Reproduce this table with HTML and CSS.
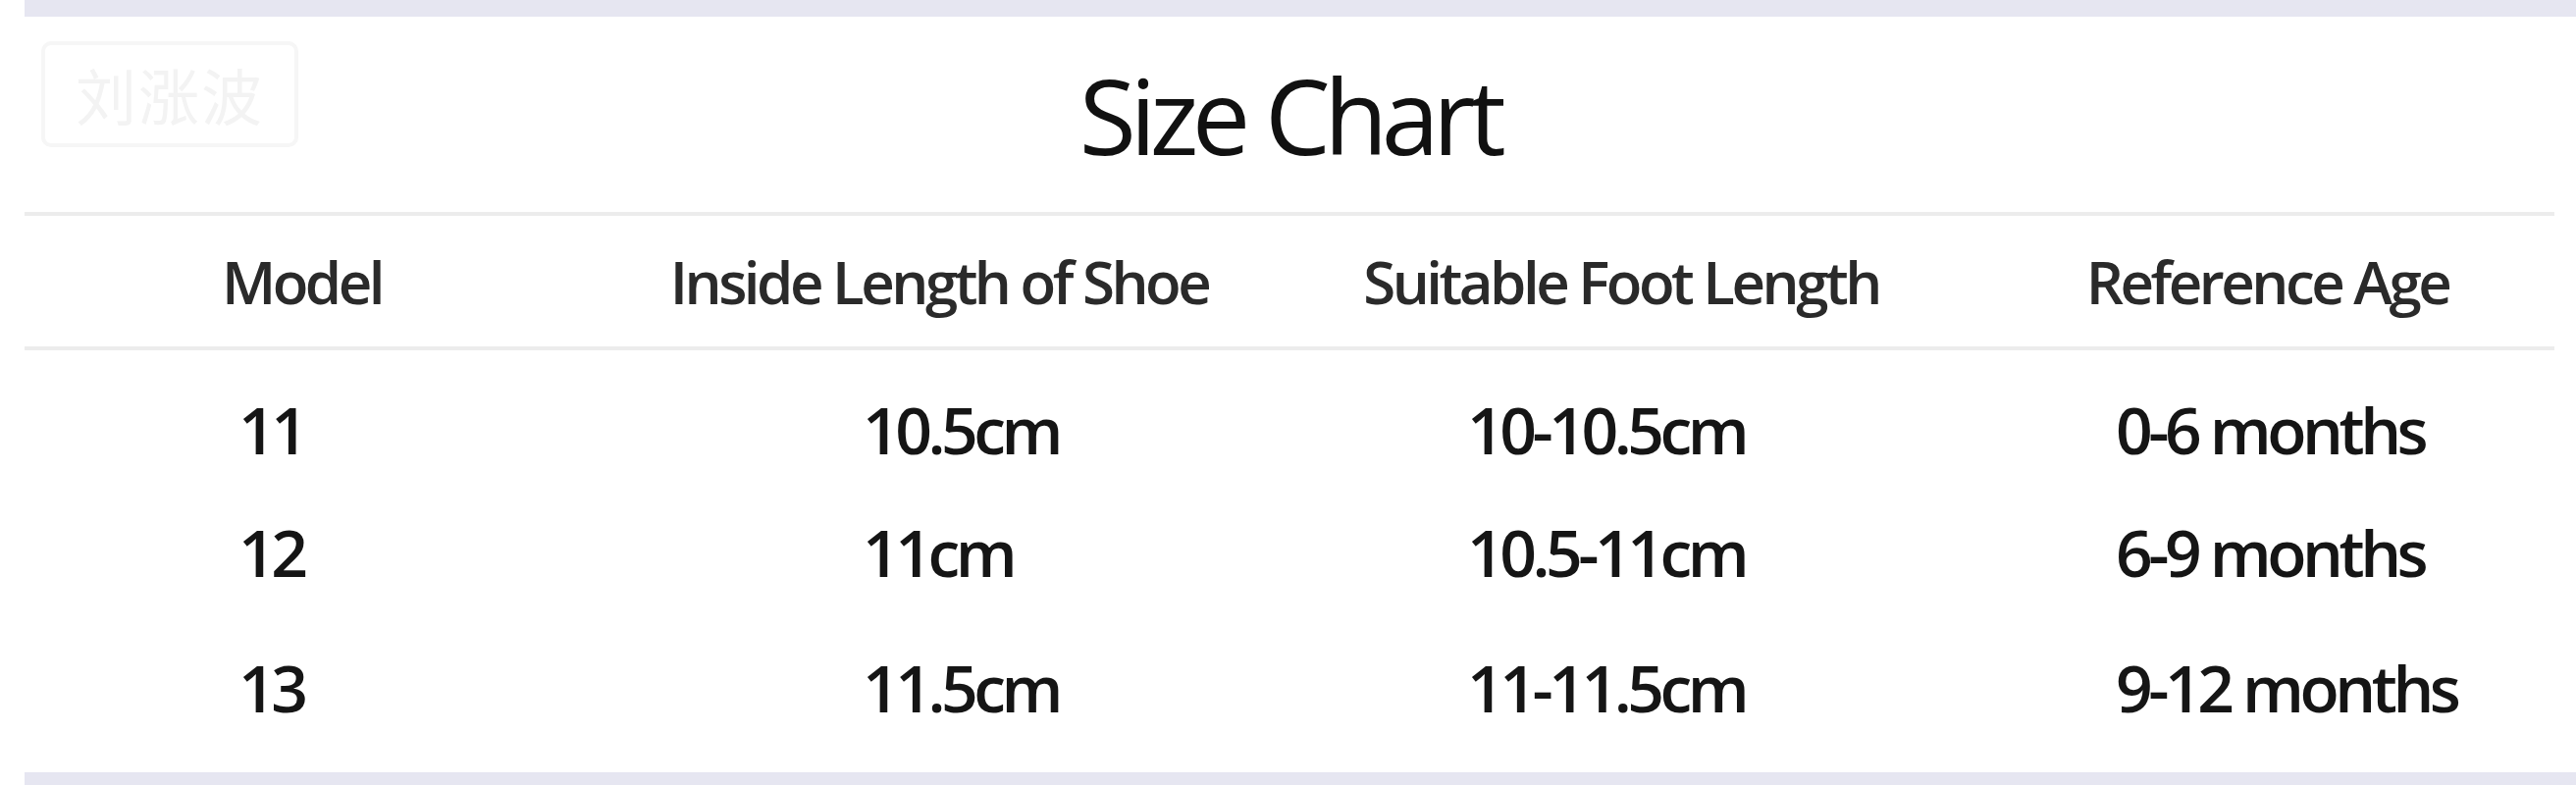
FILE: index.html
```html
<!DOCTYPE html>
<html lang="en">
<head>
  <meta charset="UTF-8">
  <meta name="viewport" content="width=device-width, initial-scale=1.0">
  <title>Size Chart</title>
  <link rel="stylesheet" href="styles.css">
</head>
<body>
  <div class="band"></div>
  <div class="head">
    <div class="stamp">刘涨波</div>
    <h1 class="title">Size Chart</h1>
  </div>
  <div class="rule"></div>
  <div class="row header">
    <div class="cell">Model</div>
    <div class="cell">Inside Length of Shoe</div>
    <div class="cell">Suitable Foot Length</div>
    <div class="cell">Reference Age</div>
  </div>
  <div class="rule"></div>
  <div class="rows">
    <div class="row data">
      <div class="cell">11</div>
      <div class="cell">10.5cm</div>
      <div class="cell">10-10.5cm</div>
      <div class="cell">0-6 months</div>
    </div>
    <div class="row data">
      <div class="cell">12</div>
      <div class="cell">11cm</div>
      <div class="cell">10.5-11cm</div>
      <div class="cell">6-9 months</div>
    </div>
    <div class="row data">
      <div class="cell">13</div>
      <div class="cell">11.5cm</div>
      <div class="cell">11-11.5cm</div>
      <div class="cell">9-12 months</div>
    </div>
  </div>
  <div class="band"></div>
</body>
</html>
```

FILE: styles.css
```css
body {
  margin: 0;
  width: 2625px;
  height: 800px;
  overflow: hidden;
  background-color: #fff;
  font-family: "Open Sans", "Noto Sans CJK SC", sans-serif;
  color: #141414;
}
.band {
  margin-left: 25px;
  height: 17px;
  background-color: #e6e6f1;
}
.head {
  position: relative;
  height: 199px;
  display: flex;
  justify-content: center;
  align-items: center;
  margin-left: 25px;
  margin-right: 22px;
}
.stamp {
  position: absolute;
  left: 17px;
  top: 25px;
  width: 262px;
  height: 108px;
  box-sizing: border-box;
  border: 4px solid #f6f6f6;
  border-radius: 10px;
  display: flex;
  align-items: center;
  justify-content: center;
  font-size: 62px;
  color: #f3f3f3;
  letter-spacing: 2px;
}
.title {
  margin: 0;
  font-size: 106px;
  font-weight: 500;
  letter-spacing: -6.5px;
  line-height: 1;
  color: #111;
}
.rule {
  margin-left: 25px;
  margin-right: 22px;
  height: 4px;
  background-color: #ececec;
}
.row {
  display: grid;
  grid-template-columns: 565px 734px 656px 623px;
  margin-left: 25px;
  align-items: center;
}
.header {
  height: 133px;
  font-size: 60px;
  font-weight: 600;
  letter-spacing: -3.5px;
  color: #2a2a2a;
}
.header .cell {
  text-align: center;
}
.header .cell:nth-child(4) {
  padding-left: 38px;
}
.rows {
  height: 430px;
  box-sizing: border-box;
  padding-top: 17px;
}
.data {
  height: 125px;
  font-size: 66px;
  font-weight: 600;
  letter-spacing: -4.5px;
  color: #151515;
}
.data:last-child {
  margin-top: 13px;
}
.data .cell:nth-child(1) {
  padding-left: 218px;
}
.data .cell:nth-child(2) {
  padding-left: 289px;
}
.data .cell:nth-child(3) {
  padding-left: 171px;
}
.data .cell:nth-child(4) {
  padding-left: 176px;
}
```
